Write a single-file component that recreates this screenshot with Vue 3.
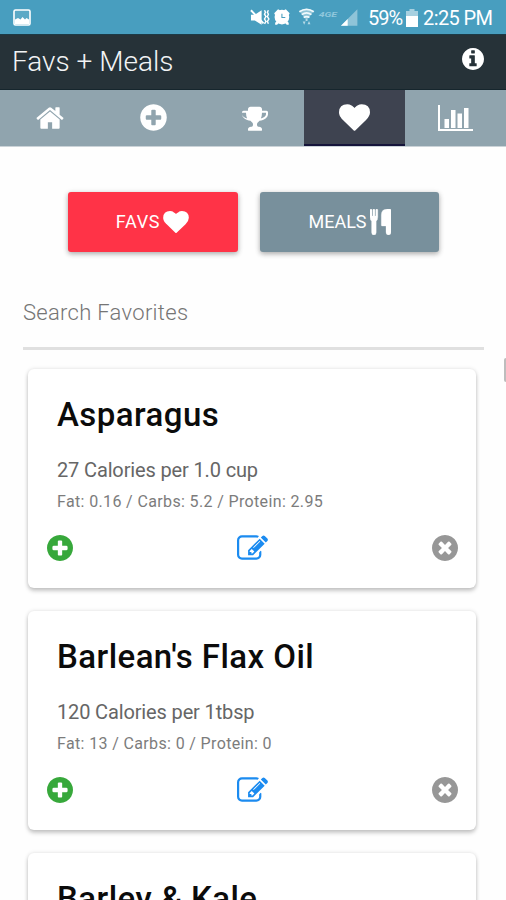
<script setup>
const disc = 'M1664 896q0 209-103 385.500t-279.500 279.500-385.500 103-385.500-103-279.500-279.500-103-385.500 103-385.500 279.500-279.500 385.500-103 385.500 103 279.500 279.500 103 385.500z'
const icons = {
  home: 'M1472 992v480q0 26-19 45t-45 19h-384v-384h-256v384h-384q-26 0-45-19t-19-45v-480q0-1 .5-3t.5-3l575-474 575 474q1 2 1 6zm223-69l-62 74q-8 9-21 11h-3q-13 0-21-7l-692-577-692 577q-12 8-24 7-13-2-21-11l-62-74q-8-10-7-23.500t11-21.500l719-599q32-26 76-26t76 26l244 204v-195q0-14 9-23t23-9h192q14 0 23 9t9 23v408l219 182q10 8 11 21.500t-7 23.500z',
  plus: 'M1344 960v-128q0-26-19-45t-45-19h-256v-256q0-26-19-45t-45-19h-128q-26 0-45 19t-19 45v256h-256q-26 0-45 19t-19 45v128q0 26 19 45t45 19h256v256q0 26 19 45t45 19h128q26 0 45-19t19-45v-256h256q26 0 45-19t19-45z' + disc,
  times: 'M1277 1122q0-26-19-45l-181-181 181-181q19-19 19-45 0-27-19-46l-90-90q-19-19-46-19-26 0-45 19l-181 181-181-181q-19-19-45-19-27 0-46 19l-90 90q-19 19-19 46 0 26 19 45l181 181-181 181q-19 19-19 45 0 27 19 46l90 90q19 19 46 19 26 0 45-19l181-181 181 181q19 19 45 19 27 0 46-19l90-90q19-19 19-46z' + disc,
  info: 'M1152 1376v-160q0-14-9-23t-23-9h-96v-512q0-14-9-23t-23-9h-320q-14 0-23 9t-9 23v160q0 14 9 23t23 9h96v320h-96q-14 0-23 9t-9 23v160q0 14 9 23t23 9h448q14 0 23-9t9-23zm-128-896v-160q0-14-9-23t-23-9h-192q-14 0-23 9t-9 23v160q0 14 9 23t23 9h192q14 0 23-9t9-23z' + disc,
  trophy: 'M458 930q-74-162-74-370h-256v96q0 78 94.500 162t235.500 112zm1206-274v-96h-256q0 208-74 370 141-28 235.500-112t94.500-162zm128-128v128q0 71-41.500 143t-112 130-173 97.500-215.500 44.500q-42 54-95 95-38 34-52.500 72.500t-14.500 89.500q0 54 30.500 91t97.500 37q75 0 133.500 45.500t58.500 114.500v64q0 14-9 23t-23 9h-832q-14 0-23-9t-9-23v-64q0-69 58.500-114.500t133.500-45.500q67 0 97.500-37t30.500-91q0-51-14.500-89.500t-52.500-72.500q-53-41-95-95-113-5-215.500-44.500t-173-97.500-112-130-41.500-143v-128q0-40 28-68t68-28h288v-96q0-66 47-113t113-47h576q66 0 113 47t47 113v96h288q40 0 68 28t28 68z',
  heart: 'M896 1664q-26 0-44-18l-624-602q-10-8-27.500-26t-55.500-65.500-68-97.500-53.500-121-23.500-138q0-220 127-344t351-124q62 0 126.500 21.500t120 58 95.500 68.500 76 68q36-36 76-68t95.500-68.500 120-58 126.500-21.500q224 0 351 124t127 344q0 221-229 450l-623 600q-18 18-44 18z',
  edit: 'M888 1184l116-116-152-152-116 116v56h96v96h56zm440-720q-16-16-33 1l-350 350q-17 17-1 33t33-1l350-350q17-17 1-33zm80 594v190q0 119-84.500 203.500t-203.500 84.500h-832q-119 0-203.500-84.500t-84.500-203.500v-832q0-119 84.500-203.500t203.500-84.500h832q63 0 117 25 15 7 18 23 3 17-9 29l-49 49q-14 14-32 8-23-6-45-6h-832q-66 0-113 47t-47 113v832q0 66 47 113t113 47h832q66 0 113-47t47-113v-126q0-13 9-22l64-64q15-15 35-7t20 29zm-96-738l288 288-672 672h-288v-288zm444 132l-92 92-288-288 92-92q28-28 68-28t68 28l152 152q28 28 28 68t-28 68z'
}
const tabs = ['home', 'plus', 'trophy', 'heart', 'chart']
const foods = [
  { name: 'Asparagus', cal: '27 Calories per 1.0 cup', macros: 'Fat: 0.16 / Carbs: 5.2 / Protein: 2.95' },
  { name: "Barlean's Flax Oil", cal: '120 Calories per 1tbsp', macros: 'Fat: 13 / Carbs: 0 / Protein: 0' },
  { name: 'Barley & Kale' }
]
</script>

<template>
  <div class="screen">
    <div class="status">
      <svg class="gallery" viewBox="0 0 18 17" width="18" height="17">
        <rect x="1" y="1" width="16" height="15" rx="1.500" fill="#5ba9c6" stroke="#fff" stroke-width="1.600" />
        <path d="M2 15v-4.500l3-1.500 2.500 1.500 2-2.500 2.500 2.500 1.500-1.500L16 10.500V15z" fill="#fff" />
      </svg>
      <div class="right">
        <svg class="sys" viewBox="0 0 122 22" width="122" height="22">
          <g fill="#fff">
            <path d="M1 6.500h4L12 2v15L5 12.500H1z" />
            <path d="M1 2l13 13.500" stroke="#fff" stroke-width="2" />
            <path d="M15 2l1 2-1 2 1.500 2.500L15 11l1.500 2.500L15 16M19 2l-1 2 1 2-1 2.500 1.500 2.500-1.500 2.500 1 2.500" fill="none" stroke="#fff" stroke-width="1.500" />
            <circle cx="33" cy="9" r="7.600" />
            <path d="M25 5l4-4 2 1-5 5zM41 5l-4-4-2 1 5 5zM26 15l2-2 2 2-2 2h-2zM40 15l-2-2-2 2 2 2h2z" />
          </g>
          <path d="M33 5.500V9.500h3.500" fill="none" stroke="#489ebf" stroke-width="1.100" />
          <path d="M51 3q7.500-5 15 0l-7.500 9z" fill="#fff" opacity=".4" />
          <g fill="none" stroke="#f1f9fc" stroke-width="1.700">
            <path d="M51 3.500q7.500-5 15 0M53.500 6.500q5-3.500 10 0M55.500 9.500q3-2 6 0" />
          </g>
          <path d="M54.500 13.500h3l-1.500 3.500zM59.500 16.500h3l-1.500-3.500zM57.500 11h2v2h-2z" fill="#b5d9e6" />
          <text x="71" y="9" class="lte" textLength="19" lengthAdjust="spacingAndGlyphs">4GE</text>
          <path d="M111 1v17H94z" fill="#8fc4d8" />
          <path d="M101 11v7h-7z" fill="#fff" />
        </svg>
        <span class="pct">59%</span>
        <svg class="batt" viewBox="0 0 12 18" width="12" height="18">
          <path d="M3.500 0h5v2H12v5H0V2h3.500z" fill="#a7d0e0" /><path d="M0 7h12v11H0z" fill="#fff" />
        </svg>
        <span class="time">2:25 PM</span>
      </div>
    </div>

    <header class="bar">
      <h1>Favs + Meals</h1>
      <svg class="info" viewBox="128 128 1536 1536" width="22" height="22"><path :d="icons.info" fill-rule="evenodd" /></svg>
    </header>

    <nav class="tabs">
      <div v-for="t in tabs" :key="t" class="tab" :class="[t, { active: t === 'heart' }]">
        <svg v-if="t === 'chart'" viewBox="0 0 35 26" width="35" height="26">
          <path d="M0 0h2v24h33v2H0zM6.500 14h4.500v9H6.500zM13 5h4.500v18H13zM19.500 8.500H24v14.500h-4.500zM26 3h4.500v20H26z" />
        </svg>
        <svg v-else viewBox="0 0 1792 1792" width="31" height="31"><path :d="icons[t]" fill-rule="evenodd" /></svg>
      </div>
    </nav>

    <div class="buttons">
      <button class="btn favs"><span>FAVS</span>
        <svg viewBox="0 128 1792 1536" width="26" height="22"><path :d="icons.heart" /></svg>
      </button>
      <button class="btn meals"><span>MEALS</span>
        <svg viewBox="0 0 21 26" width="21" height="26">
          <path d="M0 1q0-1 1-1t1 1v6h.9V1q0-1 1-1t1 1v6h.9V1q0-1 1-1t1 1v7q0 3-1.600 4v11.500Q6.200 26 3.900 26T1.600 23.500V12Q0 11 0 8zM21 1v22q0 3-2.500 3T16 23v-6h-4q-.7 0-.7-.8V6q0-6 6-6h2.700q1 0 1 1z" stroke="#fff" stroke-width=".3" />
        </svg>
      </button>
    </div>

    <div class="search"><span>Search Favorites</span></div>

    <main class="list">
      <article v-for="f in foods" :key="f.name" class="card">
        <h2>{{ f.name }}</h2>
        <template v-if="f.cal">
          <p class="cal">{{ f.cal }}</p>
          <p class="macros">{{ f.macros }}</p>
          <div class="actions">
            <svg class="add" viewBox="128 128 1536 1536" width="26" height="26"><path :d="icons.plus" fill-rule="evenodd" /></svg>
            <svg class="edit" viewBox="0 128 1792 1408" width="31" height="25"><path :d="icons.edit" fill-rule="evenodd" /></svg>
            <svg class="del" viewBox="128 128 1536 1536" width="26" height="26"><path :d="icons.times" fill-rule="evenodd" /></svg>
          </div>
        </template>
      </article>
    </main>
    <i class="thumb"></i>
  </div>
</template>

<style>
html, body { margin: 0; overflow: hidden; background: #fefefe; }
</style>
<style scoped>
.screen { position: relative; width: 506px; height: 900px; overflow: hidden; background: #fefefe; font-family: Roboto, sans-serif; }
h1, h2, p { margin: 0; font-weight: 400; white-space: nowrap; }
svg { display: block; flex: none; }
.status { height: 34px; background: #489ebf; display: flex; align-items: flex-start; justify-content: space-between; padding: 0 14px 0 13px; box-sizing: border-box; color: #fff; }
.gallery { margin-top: 9px; }
.right { display: flex; align-items: flex-start; font-size: 20px; line-height: 36px; white-space: nowrap; }
.sys { margin-top: 8px; width: 118px; overflow: visible; }
.lte { font: italic 700 8px Roboto, sans-serif; fill: #8fc7dc; }
.pct { width: 34px; letter-spacing: -1px; }
.batt { margin: 9px 5px 0 4px; }
.time { width: 69px; letter-spacing: -.6px; }
.bar { height: 56px; box-sizing: border-box; border-top: 1px solid #1c3a46; border-bottom: 1px solid #16262d; background: #263238; display: flex; justify-content: space-between; align-items: flex-start; padding: 0 22px 0 12px; color: #f2f4f5; }
h1 { font-size: 28px; font-weight: 300; line-height: 53px; }
.info { fill: #fff; margin-top: 13px; }
.tabs { display: flex; height: 56px; background: #90a4ae; border-bottom: 1px solid #cbd3d8; }
.tab { flex: 1 1 0; min-width: 0; box-sizing: border-box; display: flex; justify-content: center; align-items: center; padding-bottom: 1px; }
.tab svg { fill: #fff; }
.tab.active { background: #3e4350; border-bottom: 2px solid #15143a; padding: 0; }
.tab.home svg { width: 30px; height: 30px; }
.tab.plus { padding-left: 2px; }
.tab.trophy svg { width: 28px; height: 30px; }
.buttons { display: flex; gap: 22px; padding: 45px 0 0 68px; }
.btn { height: 60px; padding: 0 0 1px; border: 0; border-radius: 3px; color: #fff; font: 400 18px Roboto, sans-serif; display: flex; align-items: center; justify-content: center; box-shadow: 0 2px 5px rgba(0,0,0,.26), 0 1px 6px rgba(0,0,0,.1); }
.btn svg { fill: #fff; margin-left: 3px; }
.favs { width: 170px; padding-right: 1px; background: #ff3347; letter-spacing: .7px; }
.meals { width: 179px; background: #78909c; }
.search { margin: 38px 22px 0 23px; height: 57px; border-bottom: 3px solid #e0e0e0; font-size: 22px; font-weight: 300; line-height: 45px; letter-spacing: .3px; color: #757575; }
.list { padding: 19px 30px 0 28px; display: grid; gap: 23px; }
.card { height: 219px; box-sizing: border-box; background: #fff; border-radius: 6px; padding: 22px 18px 0 19px; box-shadow: 0 3px 4px rgba(0,0,0,.2), 0 0 4px rgba(0,0,0,.12); }
h2 { font-size: 33px; font-weight: 500; line-height: 48px; padding-left: 10px; color: #0b0b0b; letter-spacing: .45px; }
.cal { padding-left: 10px; margin-top: 17px; font-size: 20px; line-height: 28px; letter-spacing: -.14px; color: #666; }
.macros { padding-left: 10px; margin-top: 7px; font-size: 16px; line-height: 22px; letter-spacing: .36px; color: #7c7c7c; }
.actions { display: flex; justify-content: space-between; align-items: center; margin-top: 22px; height: 26px; }
.add { fill: #37a83b; }
.edit { fill: #1b8bf0; margin-top: -1px; }
.del { fill: #979797; }
.thumb { position: absolute; right: 0; top: 358px; width: 2px; height: 24px; background: #bdbdbd; border-radius: 2px 0 0 2px; }
</style>
